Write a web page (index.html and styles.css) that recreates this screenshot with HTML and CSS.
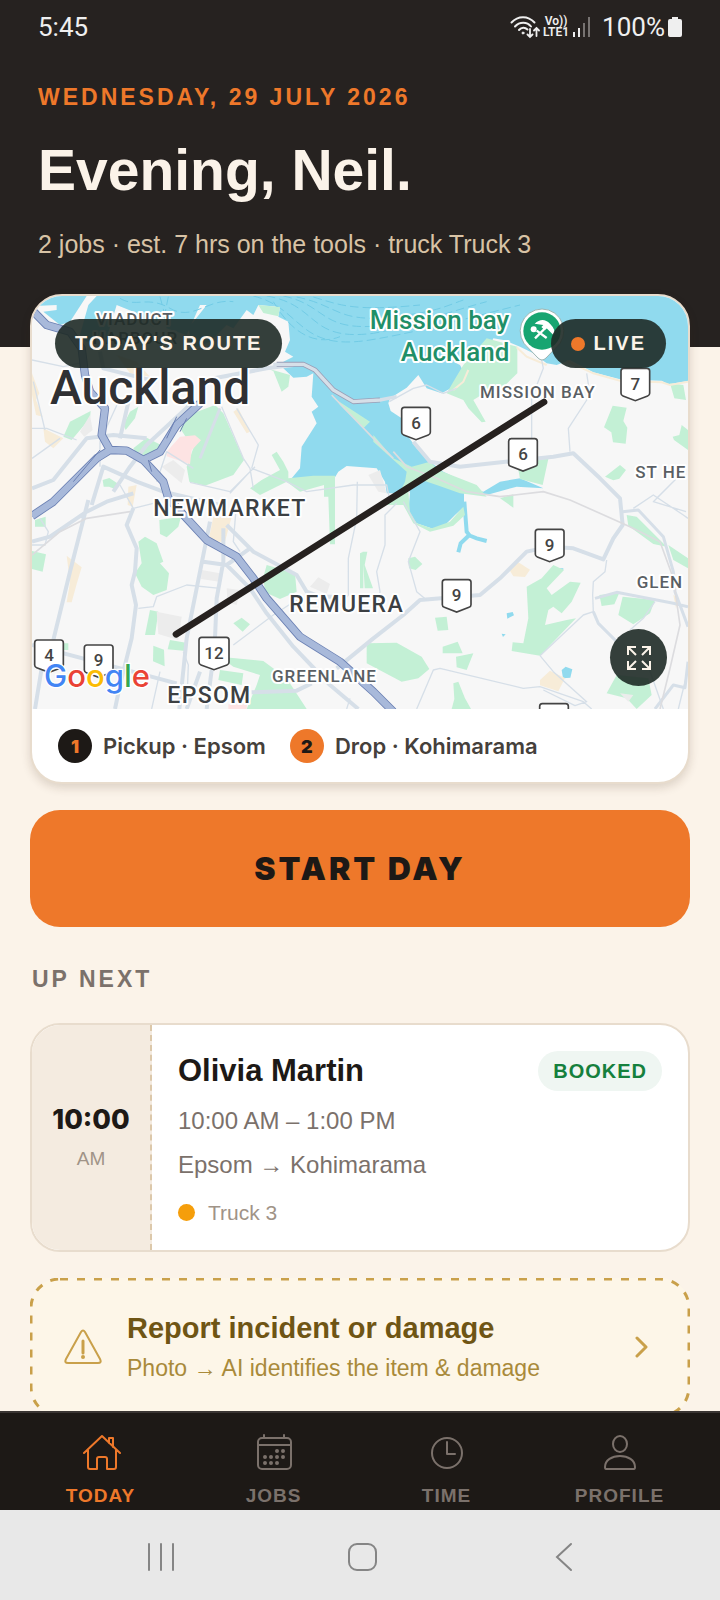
FILE: index.html
```
<!DOCTYPE html>
<html lang="en">
<head>
  <meta charset="UTF-8" />
  <meta name="viewport" content="width=device-width, initial-scale=1.0"/>
  <title>Today</title>
  <link rel="stylesheet" href="styles.css">
</head>
<body>

<div class="scroll">
  <header class="hero">
    <div class="status">
      <span class="clock">5:45</span>
      <div class="status-icons">
        <svg width="30" height="24" viewBox="0 0 30 24" fill="none" stroke="#efefef" stroke-width="2" stroke-linecap="round">
          <path d="M1.500 7.500C8 .5 18 .5 24.500 7.500M5 11.500C9.500 6.500 17 6.500 21 11.500M9 15c2.500-3 6-3 8.500-.5"/>
          <circle cx="13" cy="18" r="1" fill="#efefef" stroke-width="1"/>
          <path d="M20 14v8M17.500 19.500l2.500 2.500 2.500-2.500M26.500 21v-8M24 15.500l2.500-2.500 2.500 2.500" stroke-width="1.800"/>
        </svg>
        <div class="lte"><span>Vo))</span><span>LTE1</span></div>
        <svg width="20" height="22" viewBox="0 0 20 22" stroke-width="2">
          <path d="M2 16v5M7 12v9" stroke="#efefef"/>
          <path d="M12 7v14M17 1v20" stroke="#777371"/>
        </svg>
        <span class="battery">100%</span>
        <svg width="14" height="22" viewBox="0 0 14 22" fill="#efefef">
          <path d="M4 1h6v2h2a2 2 0 0 1 2 2v14a2 2 0 0 1-2 2H2a2 2 0 0 1-2-2V5a2 2 0 0 1 2-2h2z"/>
        </svg>
      </div>
    </div>
    <p class="date">WEDNESDAY, 29 JULY 2026</p>
    <h1>Evening, Neil.</h1>
    <p class="summary">2 jobs · est. 7 hrs on the tools · truck Truck 3</p>
  </header>

  <main>
    <!-- Route map -->
    <section class="route">
      <div class="map">
        <svg class="map-art" viewBox="36 33 1968 1239" preserveAspectRatio="xMidYMid slice">
          <rect x="36" y="33" width="1968" height="1239" fill="#f7f7f7"/>
          <!-- water -->
          <path fill="#90daee" d="M36 33H2004V288L1945 298 1925 287 1800 283 1720 262 1650 225 1610 240 1580 235 1540 205 1500 185 1450 165 1420 160 1405 195 1340 215 1300 230 1320 240 1333 265 1320 295 1265 325 1220 310 1195 270 1160 308 1110 340 1105 355 1112 378 1145 400 1165 455 1190 490 1230 530 1270 560 1310 580 1350 610 1390 620 1440 590 1500 580 1570 610 1490 605 1400 630 1332 625 1332 665 1305 690 1270 725 1240 732 1190 715 1165 680 1170 625 1160 590 1140 625 1100 625 1095 590 1070 550 980 543 955 560 940 585 860 578 815 580 840 550 845 485 890 415 875 380 895 365 875 335 880 265 860 275 820 278 790 250 790 230 820 215 795 200 810 165 805 110 775 95 780 66 715 60 700 90 680 75 640 130 620 120 590 150 570 170 520 190 505 130 560 60 540 60 500 150 440 130 430 90 400 125 340 80 290 60 260 160 200 170 180 150 205 60 230 33 200 33 150 110 120 120 70 80 110 75 110 60 60 62 36 66Z"/>
          <path fill="none" stroke="#90daee" stroke-width="12" d="M1333 650L1340 740 1348 750 1322 775 1315 802M1345 750L1370 760 1400 768"/>
          <path fill="none" stroke="#72cbe5" stroke-width="3" stroke-dasharray="26 12" d="M700 33C850 70 830 200 1050 165C1200 140 1300 110 1500 60M740 33C900 60 860 170 1060 145C1200 120 1250 90 1400 50M790 33C920 60 900 140 1080 122M830 36C950 60 950 110 1100 98C1250 80 1260 70 1330 45M880 36C960 60 1000 80 1200 60M300 40C350 70 380 30 450 70S560 40 640 50M420 35L440 110M445 35L430 110M760 50C800 120 870 190 960 155"/>
          <g fill="#90daee">
            <path d="M1460 985l18-4 4 10-20 10zM1445 1046l12 2-8 8zM1625 1155l12-10 20 8-6 25-22 2zM1620 850h10v4h-10zM555 480l-20 15 5-12z"/>
          </g>
          <!-- parks -->
          <g fill="#c3f0d5">
            <path d="M585 360L610 385 672 525 640 570 555 602 508 590 500 545 520 490 480 430 520 385ZM130 455L150 410 212 378 210 400 155 465ZM310 420l20-40 25-15-10 35-28 35zM340 490l40-32 55 28-30 30-55-10zM248 585l20-6 24 16-5 18-20-8-16 0zM740 250l70 20-5 35-20 15-25-62zM715 60l65 6-5 28-45-10z"/>
            <path d="M690 610L725 585 780 555 755 510 770 500 790 530 805 560 805 580 880 572 945 572 945 778 930 778 925 635 912 635 912 600 840 620 800 590 720 630Z"/>
            <path d="M1330 240L1400 160 1492 185 1492 265 1440 315 1400 320 1360 345 1397 410 1385 412 1345 370 1330 345 1280 325 1300 290Z"/>
            <path d="M950 345L1050 410 1030 430 960 360ZM1060 450L1120 520 1175 545 1230 530 1255 555 1370 600 1400 635 1320 625 1250 600 1190 580 1165 620 1170 680 1190 715 1235 730 1290 710 1330 665 1335 690 1300 722 1230 740 1180 715 1150 660 1090 660 1135 630 1155 590 1160 560 1060 470Z"/>
            <path d="M1490 525L1585 522 1568 600 1500 582ZM1440 640l40-12v40zM1778 362l42 6-10 40 12 20-5 48-38-4-5-30-22-15zM1755 575l45-35 18 15-20 26-18 5zM1985 420l19 15v60l-42-30-4-10 20-5zM1950 295l40 5 8 45-35-5z"/>
            <path d="M1600 840L1632 855 1580 910 1595 930 1650 890 1682 893 1655 950 1625 985 1600 965 1585 975 1575 1020 1640 1005 1668 1000 1560 1112 1475 1098 1478 1072 1510 1075 1525 1000 1520 905 1565 880Z"/>
            <path d="M1040 1075L1130 1073 1205 1115 1228 1152 1195 1180 1145 1190 1040 1135ZM1245 998l35-3 5 40-32 2zM1268 1085l45-15 15 35-60 0zM1308 1115l52-10-20 50-30-8zM1300 1195l15-5 20 50 18 32h-58l8-30zM1165 820l20-5 22 22-20 18-20-5zM1028 800h14l-8 40 25 70h-25zM1020 805l10-5v110h-10z"/>
            <path d="M1738 930l60-7-15 35-38 5zM1808 935L1905 945 1890 985 1840 1018 1795 990ZM1820 690l30 5 90 90-40-8-75-55zM1945 780L2004 820V850L1960 825ZM1760 1225L1790 1170 1885 1180 1895 1230 1850 1272 1820 1240Z"/>
            <path d="M355 770L375 755 410 775 430 830 420 835 447 865 440 915 400 930 365 905 345 865 365 835ZM36 798l42 10-10 52-32-8zM45 705l32-10v30h-32zM418 705l65-10-8 30-35 32-20-10zM390 975l25 5-10 70-30 0zM400 1082l32 12 2 50-35-15zM450 1065l48 8v25l-55-5zM640 1015l25-17 25 20-22 22zM740 840l85 25 5 55-50 22-45-20-5-45zM600 1155l70 10-5 35-70-15zM600 1115L730 1128 800 1180 860 1272H680L710 1200 720 1170 640 1145ZM130 1075h15v20h-15z"/>
          </g>
          <g fill="#f7ecd8">
            <path d="M36 265l22 60-10 20 20 50-20-5-12-60zM70 430l60 30-30 30-25-20zM655 370l35 70-10 5-40-65zM1465 850l30-18 35 22-15 22-35-2zM1560 1185l30-28 45 22-20 40-55-18zM580 695h55l-20 75h-50zM140 812l45 35-15 50-15 55-15 0 10-60zM325 605l25-5-12 65-15-5zM1960 930l18 10-10 30zM290 210l60 20 40 45-60-10z"/>
          </g>
          <path fill="#fde3e3" d="M440 500l40-45 45-4 18 15-28 30-5 42-70-24zM625 1258h55v14h-55z"/>
          <path fill="#ececec" d="M180 440l30-50 8 45-25 20zM425 545l35-20 35 30-10 40zM410 980l75 15-10 70-60-18zM545 855l55 10-2 25-55-8zM620 910l40 5-10 45-28-8zM870 905l25-28 35 20-10 30zM1045 570l35-15 20 70-25-5zM1800 1225l40 5-15 20z"/>
          <path fill="none" stroke="#f7ecd8" stroke-width="6" d="M1490 187L1520 215 1580 240M1640 228L1720 265 1800 287 1925 292 1950 300 2004 290M1345 255L1330 290 1300 315"/>
          <!-- streets -->
          <g fill="none" stroke="#d6dfe8" stroke-linejoin="round">
            <path stroke-width="12" d="M36 610L100 585 200 460 280 450 380 460M215 660L250 545 350 590 430 620 600 660M280 620L330 545 380 480 520 350M205 645L150 860 100 1065M36 770L90 755 200 680 260 650 340 625M340 670L320 720 350 790 345 860 335 900 348 960 335 1060 300 1200 285 1272M570 710L540 860 500 1060 478 1272M610 730L610 830 590 940 585 1060M575 1155L560 1272M550 830L620 840 690 790M620 840L690 910 740 985 820 1085 930 1200 1015 1272M620 720L700 800 830 870 860 920 900 935 960 935M695 1222L830 1217 875 1195M36 1080L470 1195M950 1150L1060 1060 1150 990 1200 945 1380 930 1440 880 1520 800 1590 785 1660 790 1750 823 1780 760 1808 720 1800 640 1740 580 1660 505 1600 515 1320 545 1230 530 1180 470M540 1160L500 1272M65 1150L45 1272M330 330L300 460M410 290L250 250 240 200M555 285L740 250 820 240"/>
            <path stroke-width="9" d="M1808 680L1855 675 1930 755 1960 860 1965 920 2004 1025M1905 1272L1960 1200 1995 1208 2004 1130M1720 980L1735 1015 1790 1070M1725 940L1790 922 1960 955 2004 965M600 370L580 420 540 520"/>
            <path stroke-width="4" d="M36 225L130 245 200 230M36 430L80 430 170 465M36 520L120 460M75 435L40 290M510 592L630 620 705 545M410 590L440 500 520 550M605 365L670 520 690 550 700 610M650 370L715 480 695 550M695 550L800 590 860 620 1000 600 1100 600 1110 650M630 625L690 560M1012 590L1010 700 985 820 985 930 960 960M1130 655L1095 690 1095 780 1070 860 1080 920 1075 950M1150 650L1200 740 1165 830 1190 920 1220 945M1535 340L1570 250 1560 200M1535 340V500M1650 500L1645 430 1710 330 1700 265M1108 350L1180 310 1220 300 1270 325 1310 310M1190 1272L1240 1155 1260 1150 1510 1210 1560 1205 1690 1250 1715 1272M1560 1112L1600 1160 1700 1250 1665 1262 1570 1215M1560 1112L1690 990 1720 980 1718 930 1720 890 1755 860 1760 825M1830 1035L1870 1000 1905 950M1880 1130L1930 1272M1975 1272L2000 1170M355 970L400 965 410 935 500 900 600 910M490 1100L505 1140 500 1272M395 1272L420 1160M640 1080L760 990 830 945M1840 670L1900 630 1990 690 2004 700M1910 640L1980 570 1900 650 1998 680M650 650L640 770 660 800M60 700L85 740 75 780 36 780M240 545L240 470 300 340M980 1272L990 1240M300 600L340 670 400 655"/>
            <path stroke="#dcdcdf" stroke-width="5" d="M1120 500L1160 545 1250 580 1340 620 1440 635 1570 620 1650 645 1830 725 1920 770 1960 880 1980 1020 1950 1150 1920 1272M935 330L1060 460 1120 520M36 810L120 740 200 700 330 680"/>
          </g>
          <g fill="none" stroke-linejoin="round">
            <path stroke="#9aa0b8" stroke-width="15" d="M770 238L850 238 885 255 940 315 1000 350 1080 345"/>
            <path stroke="#d6dfe8" stroke-width="10" d="M760 238L850 238 885 255 940 315 1000 350 1080 345 1130 335"/>
            <!-- motorways -->
            <path stroke="#6b80b3" stroke-width="25" d="M36 75L80 120 150 140 185 190 195 270 210 320 255 370 245 450 270 495 320 497 370 525 420 500 470 420 540 355M270 495L230 520 100 650 36 693M370 525L430 590 445 640 500 700 560 765 650 815 700 880 740 940 840 1055 960 1130 1060 1220 1120 1280"/>
            <path stroke="#a8b9da" stroke-width="20" d="M36 75L80 120 150 140 185 190 195 270 210 320 255 370 245 450 270 495 320 497 370 525 420 500 470 420 540 355M270 495L230 520 100 650 36 693M370 525L430 590 445 640 500 700 560 765 650 815 700 880 740 940 840 1055 960 1130 1060 1220 1120 1280"/>
            <path stroke="#6b80b3" stroke-width="3" d="M240 495L160 590M385 525L395 560M440 460L470 395M480 440L500 400"/>
          </g>

          <!-- place names -->
          <g class="place">
            <text x="228" y="120" class="suburb">VIADUCT</text>
            <text x="218" y="178" class="suburb">HARBOUR</text>
            <text x="90" y="357" class="city">Auckland</text>
            <text x="400" y="692" class="town">NEWMARKET</text>
            <text x="808" y="980" class="town">REMUERA</text>
            <text x="442" y="1253" class="town">EPSOM</text>
            <text x="756" y="1190" class="suburb">GREENLANE</text>
            <text x="1850" y="910" class="suburb">GLEN</text>
            <text x="1846" y="580" class="suburb">ST HE</text>
            <text x="1380" y="338" class="suburb">MISSION BAY</text>
            <text x="1468" y="133" class="poi">Mission bay</text>
            <text x="1468" y="227" class="poi">Auckland</text>
          </g>

          <!-- beach pin -->
          <path fill="#fff" stroke="#9db5b2" stroke-width="3" d="M1566 72a66 66 0 0 1 40 118l-28 29q-12 12-24 0l-28-29a66 66 0 0 1 40-118z"/>
          <circle cx="1566" cy="138" r="56" fill="#17a571"/>
          <g fill="#fff">
            <circle cx="1541" cy="133" r="9"/>
            <path d="M1544 116q24-22 46 0 20 20 10 34l-20-20-6 6-10-10 6-6z"/>
          </g>
          <path stroke="#fff" stroke-width="7" d="M1545 160l34-34M1550 137l30 22"/>

          <!-- route shields -->
          <g class="shield">
            <g transform="translate(1188 367)"><path d="M-35 0h70q8 0 8 8v67q0 6-6 8l-37 14-37-14q-6-2-6-8v-67q0-8 8-8z"/><text y="64">6</text></g>
            <g transform="translate(1509 461)"><path d="M-35 0h70q8 0 8 8v67q0 6-6 8l-37 14-37-14q-6-2-6-8v-67q0-8 8-8z"/><text y="64">6</text></g>
            <g transform="translate(1846 250)"><path d="M-35 0h70q8 0 8 8v67q0 6-6 8l-37 14-37-14q-6-2-6-8v-67q0-8 8-8z"/><text y="64">7</text></g>
            <g transform="translate(1589 733)"><path d="M-35 0h70q8 0 8 8v67q0 6-6 8l-37 14-37-14q-6-2-6-8v-67q0-8 8-8z"/><text y="64">9</text></g>
            <g transform="translate(1310 884)"><path d="M-35 0h70q8 0 8 8v67q0 6-6 8l-37 14-37-14q-6-2-6-8v-67q0-8 8-8z"/><text y="64">9</text></g>
            <g transform="translate(582 1057)"><path d="M-37 0h74q8 0 8 8v67q0 6-6 8l-39 14-39-14q-6-2-6-8v-67q0-8 8-8z"/><text y="64">12</text></g>
            <g transform="translate(87 1065)"><path d="M-35 0h70q8 0 8 8v67q0 6-6 8l-37 14-37-14q-6-2-6-8v-67q0-8 8-8z"/><text y="64">4</text></g>
            <g transform="translate(236 1080)"><path d="M-35 0h70q8 0 8 8v67q0 6-6 8l-37 14-37-14q-6-2-6-8v-67q0-8 8-8z"/><text y="64">9</text></g>
            <g transform="translate(1602 1256)"><path d="M-35 0h70q8 0 8 8v67q0 6-6 8l-37 14-37-14q-6-2-6-8v-67q0-8 8-8z"/></g>
          </g>

          <path d="M468 1048L1572 351" stroke="#26211f" stroke-width="20" stroke-linecap="round"/>

          <text x="72" y="1205" class="google"><tspan fill="#4285f4">G</tspan><tspan fill="#ea4335">o</tspan><tspan fill="#fbbc04">o</tspan><tspan fill="#4285f4">g</tspan><tspan fill="#34a853">l</tspan><tspan fill="#ea4335">e</tspan></text>
        </svg>
        <span class="pill pill-title">TODAY'S ROUTE</span>
        <span class="pill pill-live"><i class="dot"></i>LIVE</span>
        <button class="expand" aria-label="Expand map">
          <svg width="24" height="24" viewBox="0 0 24 24" fill="none" stroke="#fbf3e9" stroke-width="2">
            <path d="M9 1H1v8M1 1l8 8M15 1h8v8M23 1l-8 8M9 23H1v-8M1 23l8-8M15 23h8v-8M23 23l-8-8"/>
          </svg>
        </button>
      </div>
      <div class="stops">
        <div class="stop"><span class="num">1</span>Pickup · Epsom</div>
        <div class="stop"><span class="num drop">2</span>Drop · Kohimarama</div>
      </div>
    </section>

    <button class="start">START DAY</button>

    <h2>UP NEXT</h2>

    <!-- Job card -->
    <article class="job">
      <div class="job-time">
        <strong>10:00</strong>
        <span>AM</span>
      </div>
      <div class="job-body">
        <div class="job-head">
          <h3>Olivia Martin</h3>
          <span class="badge">BOOKED</span>
        </div>
        <p>10:00 AM – 1:00 PM</p>
        <p>Epsom → Kohimarama</p>
        <div class="truck"><i></i>Truck 3</div>
      </div>
    </article>

    <a class="report" href="#report">
      <svg class="dashes"><rect x="1" y="1" rx="29"/></svg>
      <svg width="38" height="36" viewBox="0 0 38 36" fill="none" stroke="#c9a04a" stroke-width="2" stroke-linecap="round" stroke-linejoin="round">
        <path d="M17 3q2-3 4 0l15 27q2 4-2 4H4q-4 0-2-4z"/>
        <path d="M19 12v12" stroke-width="3"/><circle cx="19" cy="28" r="1"/>
      </svg>
      <div class="report-text">
        <strong>Report incident or damage</strong>
        <span>Photo → AI identifies the item &amp; damage</span>
      </div>
      <svg width="13" height="22" viewBox="0 0 13 22" fill="none" stroke="#c9a04a" stroke-width="3" stroke-linecap="round" stroke-linejoin="round">
        <path d="M2 2l9 9-9 9"/>
      </svg>
    </a>
  </main>
</div>

<nav class="tabs">
  <a class="tab active" href="#today">
    <svg width="40" height="40" viewBox="0 0 40 40">
      <path d="M3 20L21 3l18 17M7 17v17q0 2 2 2h7V26q0-2 2-2h6q2 0 2 2v10h7q2 0 2-2V17M28 10V5h4v9"/>
    </svg>
    TODAY
  </a>
  <a class="tab" href="#jobs">
    <svg width="40" height="40" viewBox="0 0 40 40">
      <rect x="4" y="5" width="33" height="31" rx="4"/>
      <path d="M4 12h33M10 2v3M30 2v3"/>
      <path class="dots" d="M23 18h0M29 18h0M11 24h0M17 24h0M23 24h0M29 24h0M11 30h0M17 30h0M23 30h0"/>
    </svg>
    JOBS
  </a>
  <a class="tab" href="#time">
    <svg width="40" height="40" viewBox="0 0 40 40">
      <circle cx="20" cy="20" r="15"/>
      <path d="M20 9v12h8"/>
    </svg>
    TIME
  </a>
  <a class="tab" href="#profile">
    <svg width="40" height="40" viewBox="0 0 40 40">
      <ellipse cx="20" cy="11" rx="7" ry="8"/>
      <path d="M5 34c0-7 7-11 15-11s15 4 15 11q0 2-1 2H6q-1 0-1-2z"/>
    </svg>
    PROFILE
  </a>
</nav>

<div class="system">
  <button aria-label="Recent apps"><svg width="32" height="32" viewBox="0 0 32 32"><path d="M4 3v26M16 3v26M28 3v26"/></svg></button>
  <button aria-label="Home"><svg width="32" height="32" viewBox="0 0 32 32"><rect x="2" y="3" width="27" height="26" rx="8"/></svg></button>
  <button aria-label="Back"><svg width="32" height="32" viewBox="0 0 32 32"><path d="M23 3L9 16l14 13"/></svg></button>
</div>

</body>
</html>
```
FILE: styles.css
```
* {
  box-sizing: border-box;
}

body {
  margin: 0;
  height: 100vh;
  display: flex;
  flex-direction: column;
  background-color: #fbf3e9;
  color: #1d1916;
  font-family: "Liberation Sans", Arial, sans-serif;
}

h1, h2, h3, p {
  margin: 0;
}

button {
  border: none;
  padding: 0;
  font-family: inherit;
  cursor: pointer;
}

a {
  text-decoration: none;
}

svg {
  display: block;
  flex-shrink: 0;
}

.scroll {
  flex: 1;
  min-height: 0;
  overflow-y: auto;
  scrollbar-width: none;
}

/* Header */
.hero {
  background-color: #262220;
  padding: 12px 38px 89px;
}

.status {
  display: flex;
  justify-content: space-between;
  align-items: center;
  height: 30px;
  color: #efefef;
  font-family: Roboto, sans-serif;
  font-size: 26px;
}

.status-icons {
  display: flex;
  align-items: center;
  gap: 3px;
}

.lte {
  display: flex;
  flex-direction: column;
  align-items: center;
  font-size: 12px;
  line-height: 11px;
  font-weight: 600;
}

.battery {
  margin-left: 7px;
}

.date {
  margin-top: 41px;
  color: #ee782a;
  font-size: 23px;
  line-height: 28px;
  font-weight: bold;
  letter-spacing: 3px;
}

h1 {
  margin-top: 27px;
  color: #fbf3e9;
  font-size: 57px;
  line-height: 64px;
}

.summary {
  margin-top: 28px;
  color: #d8c3a5;
  font-size: 25px;
  line-height: 28px;
}

main {
  display: flex;
  flex-direction: column;
  gap: 26px;
  margin-top: -53px;
  padding: 0 30px 30px;
}

/* Map card */
.route {
  border: 2px solid #e8dccd;
  border-radius: 32px;
  background-color: #fff;
  overflow: hidden;
  box-shadow: 0 4px 10px rgba(60, 40, 20, 0.16);
}

.map {
  position: relative;
  height: 413px;
}

.map-art {
  width: 100%;
  height: 100%;
}

.place text {
  font-family: Roboto, sans-serif;
  font-weight: 500;
  fill: #3c4043;
  stroke: #fff;
  stroke-width: 12px;
  stroke-linejoin: round;
  paint-order: stroke;
}

.place .city {
  font-size: 144px;
  fill: #303134;
}

.place .town {
  font-size: 69px;
  letter-spacing: 4px;
}

.place .suburb {
  font-size: 51px;
  letter-spacing: 3px;
  fill: #5a5f64;
}

.place .poi {
  font-size: 78px;
  fill: #1f8f68;
  text-anchor: end;
}

.shield path {
  fill: #fff;
  stroke: #444;
  stroke-width: 5px;
}

.shield text {
  font-family: Roboto, sans-serif;
  font-size: 51px;
  font-weight: 500;
  fill: #444;
  text-anchor: middle;
}

.google {
  font-family: Inter, sans-serif;
  font-size: 93px;
  font-weight: 500;
  stroke: #fff;
  stroke-width: 8px;
  paint-order: stroke;
}

.pill {
  position: absolute;
  top: 23px;
  display: flex;
  align-items: center;
  gap: 9px;
  height: 49px;
  padding: 0 20px;
  border-radius: 25px;
  background-color: rgba(30, 42, 38, 0.9);
  color: #fbf3e9;
  font-size: 20px;
  font-weight: bold;
  letter-spacing: 2px;
}

.pill-title {
  left: 23px;
}

.pill-live {
  right: 22px;
}

.dot {
  width: 14px;
  height: 14px;
  border-radius: 50%;
  background-color: #ee782a;
}

.expand {
  position: absolute;
  right: 21px;
  bottom: 23px;
  display: grid;
  place-items: center;
  width: 57px;
  height: 57px;
  border-radius: 50%;
  background-color: rgba(30, 42, 38, 0.9);
}

.stops {
  display: flex;
  gap: 24px;
  padding: 20px 26px 19px;
}

.stop {
  display: flex;
  align-items: center;
  gap: 11px;
  color: #45403b;
  font-family: Inter, sans-serif;
  font-size: 22px;
  font-weight: 600;
}

.num {
  display: grid;
  place-items: center;
  width: 34px;
  height: 34px;
  border-radius: 50%;
  background-color: #1d1916;
  color: #ee782a;
  font-size: 18px;
  font-weight: 900;
}

.num.drop {
  background-color: #ee782a;
  color: #1d1916;
}

.start {
  height: 117px;
  border-radius: 30px;
  background-color: #ee782a;
  color: #1d1916;
  font-family: Inter, sans-serif;
  font-size: 32px;
  font-weight: 900;
  letter-spacing: 3px;
}

h2 {
  margin: 13px 0 5px;
  padding-left: 2px;
  color: #7b716b;
  font-size: 23px;
  line-height: 26px;
  letter-spacing: 3px;
}

/* Job card */
.job {
  display: flex;
  border: 2px solid #e8dccd;
  border-radius: 30px;
  background-color: #fff;
  overflow: hidden;
}

.job-time {
  display: flex;
  flex-direction: column;
  align-items: center;
  justify-content: center;
  gap: 11px;
  width: 120px;
  border-right: 2px dashed #dcc8aa;
  background-color: #f4ebe0;
}

.job-time strong {
  font-family: Inter, sans-serif;
  font-size: 27px;
  line-height: 32px;
  font-weight: 800;
}

.job-time span {
  color: #a09387;
  font-size: 19px;
  line-height: 24px;
}

.job-body {
  flex: 1;
  padding: 26px 26px 24px;
  color: #7b716b;
}

.job-head {
  display: flex;
  justify-content: space-between;
  align-items: center;
  margin-bottom: 8px;
}

h3 {
  color: #1d1916;
  font-size: 31px;
  line-height: 40px;
}

.badge {
  padding: 0 15px;
  border-radius: 20px;
  background-color: #eff6f2;
  color: #15803d;
  font-size: 20px;
  line-height: 40px;
  font-weight: bold;
  letter-spacing: 1px;
}

.job-body p {
  font-size: 24px;
  line-height: 44px;
}

.truck {
  display: flex;
  align-items: center;
  gap: 13px;
  margin-top: 12px;
  color: #a09387;
  font-size: 21px;
  line-height: 27px;
}

.truck i {
  width: 17px;
  height: 17px;
  border-radius: 50%;
  background-color: #f59e0b;
}

/* Incident report */
.report {
  position: relative;
  display: flex;
  align-items: center;
  gap: 25px;
  padding: 33px 42px 35px 34px;
  border-radius: 30px;
  background-color: #fdf6e8;
}

.dashes {
  position: absolute;
  inset: 0;
  width: 100%;
  height: 100%;
}

.dashes rect {
  width: calc(100% - 2px);
  height: calc(100% - 2px);
  fill: none;
  stroke: #c9a04a;
  stroke-width: 3px;
  stroke-dasharray: 8 9;
}

.report-text {
  flex: 1;
  display: flex;
  flex-direction: column;
  gap: 9px;
}

.report-text strong {
  color: #6f5514;
  font-size: 29px;
  line-height: 34px;
}

.report-text span {
  color: #a98a3a;
  font-size: 23px;
  line-height: 28px;
}

/* Bottom tabs */
.tabs {
  display: grid;
  grid-template-columns: repeat(4, 1fr);
  height: 99px;
  padding: 20px 14px 0;
  border-top: 2px solid #3a3533;
  background-color: #1d1916;
}

.tab {
  display: flex;
  flex-direction: column;
  align-items: center;
  gap: 12px;
  color: #7b716b;
  font-size: 19px;
  line-height: 22px;
  font-weight: bold;
  letter-spacing: 1px;
}

.tab svg {
  fill: none;
  stroke: currentColor;
  stroke-width: 2px;
  stroke-linecap: round;
  stroke-linejoin: round;
}

.tab .dots {
  stroke-width: 4px;
}

.tab.active {
  color: #ee782a;
}

.system {
  display: flex;
  justify-content: space-between;
  align-items: center;
  height: 90px;
  padding: 4px 140px 0 145px;
  background-color: #e8e8e8;
}

.system button {
  background-color: transparent;
}

.system svg {
  fill: none;
  stroke: #858585;
  stroke-width: 2px;
  stroke-linecap: round;
}
```
